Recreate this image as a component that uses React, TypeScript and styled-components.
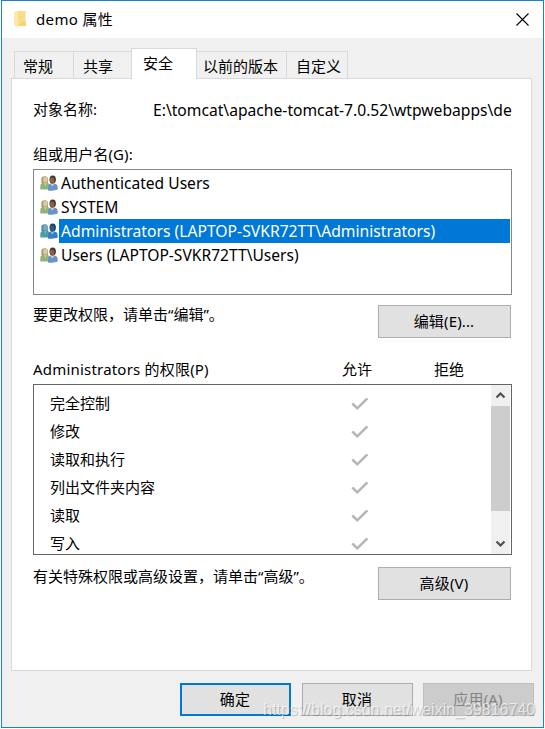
import React from "react";
import styled, { createGlobalStyle } from "styled-components";

const GlobalStyle = createGlobalStyle`
  * { box-sizing: border-box; }
  body {
    margin: 0;
    background: #fff;
    color: #000;
    font: 15px/20px "Noto Sans", "Noto Sans CJK SC", sans-serif;
    overflow: hidden;
  }
`;

const Window = styled.main`
  position: relative;
  display: flex;
  flex-direction: column;
  width: 543px;
  height: 728px;
  margin-left: 1px;
  border: 1px solid #1a80d4;
  background: #f0f0f0;
`;

const TitleBar = styled.header`
  display: flex;
  align-items: center;
  height: 37px;
  padding: 0 14px 1px 12px;
  background: #fff;
  svg { display: block; flex: none; }
`;

const Label = styled.span<{ $spacing?: number; $size?: number }>`
  display: block;
  margin: -1px 0 1px;
  white-space: pre;
  font-size: ${(p) => p.$size ?? 15}px;
  letter-spacing: ${(p) => p.$spacing ?? 0}px;
`;

const Title = styled(Label)`
  flex: 1;
  margin: -1px 0 0 8px;
`;

const TabStrip = styled.nav`
  display: flex;
  align-items: flex-end;
  height: 40px;
  margin: 0 12px;
`;

const Tab = styled.div<{ $width: number; $active?: boolean; $pad: number }>`
  width: ${(p) => p.$width}px;
  height: ${(p) => (p.$active ? 31 : 27)}px;
  margin-bottom: ${(p) => (p.$active ? -1 : 0)}px;
  padding: 4px 0 0 ${(p) => p.$pad}px;
  border: 1px solid #d9d9d9;
  border-bottom: 0;
  border-right-width: ${(p) => (p.$active ? 1 : 0)}px;
  background: ${(p) => (p.$active ? "#fff" : "#f0f0f0")};
  z-index: ${(p) => (p.$active ? 1 : 0)};
  &:last-child { border-right-width: 1px; }
  &:nth-child(4) { border-left: 0; }
`;

const Panel = styled.section`
  height: 593px;
  width: 521px;
  margin-left: 9px;
  padding: 21px 19px 0 21px;
  border: 1px solid #d9d9d9;
  background: #fff;
`;

const ObjectRow = styled.div`
  display: grid;
  grid-template-columns: 120px 1fr;
  height: 45px;
  span:last-child { margin: 0; overflow: hidden; }
`;

const UserList = styled.div`
  height: 126px;
  width: 479px;
  margin: 5px 0 10px;
  padding: 1px;
  border: 1px solid #828790;
`;

const UserRow = styled.div`
  display: flex;
  align-items: center;
  height: 24px;
  padding-left: 5px;
  svg { flex: none; margin-right: 1px; }
`;

const UserName = styled(Label)<{ $selected: boolean }>`
  flex: 1;
  height: 24px;
  margin: 0;
  padding-left: 2px;
  line-height: 24px;
  color: ${(p) => (p.$selected ? "#fff" : "#000")};
  background: ${(p) => (p.$selected ? "#0078d7" : "transparent")};
`;

const ActionRow = styled.div`
  display: flex;
  justify-content: space-between;
  width: 478px;
  height: 33px;
`;

const Button = styled.button<{ $width: number; $kind?: "default" | "disabled" }>`
  width: ${(p) => p.$width}px;
  height: 33px;
  padding: 0 1px 2px 0;
  display: flex;
  justify-content: center;
  align-items: center;
  font: inherit;
  letter-spacing: 0.15px;
  color: ${(p) => (p.$kind === "disabled" ? "#838383" : "#000")};
  background: ${(p) => (p.$kind === "disabled" ? "#ccc" : "#e1e1e1")};
  border: ${(p) =>
    p.$kind === "default" ? "2px solid #0078d7" : p.$kind === "disabled" ? "1px solid #bfbfbf" : "1px solid #adadad"};
`;

const PermissionHead = styled.div`
  display: grid;
  grid-template-columns: 309px 92px 1fr;
  margin: 21px 0 5px;
  height: 20px;
  span { margin: 0; }
`;

const PermissionBox = styled.div`
  display: flex;
  width: 479px;
  height: 171px;
  margin-bottom: 12px;
  padding-right: 1px;
  border: 1px solid #646464;
`;

const PermissionRows = styled.div`
  flex: 1;
  padding-top: 5px;
  overflow: hidden;
`;

const PermissionRow = styled.div`
  display: grid;
  grid-template-columns: 301px 1fr;
  align-items: center;
  height: 28px;
  padding-left: 16px;
  svg { display: block; }
`;

const ScrollBar = styled.div`
  display: flex;
  flex-direction: column;
  justify-content: space-between;
  width: 19px;
  background: #f0f0f0;
`;

const ScrollThumb = styled.div`
  height: 105px;
  margin-bottom: 22px;
  background: #cdcdcd;
`;

const ScrollArrow = styled.svg`
  display: block;
  width: 19px;
  height: 21px;
`;

const Footer = styled.footer`
  display: grid;
  grid-template-columns: 122px 121px 111px;
  justify-content: end;
  margin: 12px 9px 0 0;
`;

const Watermark = styled.div`
  position: absolute;
  left: 261px;
  top: 699px;
  white-space: nowrap;
  font: 16px/20px "Liberation Sans", Arial, sans-serif;
  color: rgba(255, 255, 255, 0.65);
  text-shadow: 1px 1px 1px rgba(0, 0, 0, 0.22);
`;

const FolderIcon = () => (
  <svg width="14" height="18" viewBox="0 0 14 18">
    <path d="M1 2h10v14H1z" fill="#f3cb62" />
    <path d="M3 1h8.5v15H3z" fill="#f8dc8a" />
    <path d="M9 11h3v5H5z" fill="#f6d374" />
    <path d="M0 1l4 2v15l-4-3z" fill="#ffe9a6" />
  </svg>
);

const CloseIcon = () => (
  <svg width="13" height="13" viewBox="0 0 13 13">
    <path d="M.5.5l12 12M12.5.5l-12 12" stroke="#000" strokeWidth="1.1" />
  </svg>
);

const UsersIcon = ({ selected }: { selected: boolean }) => {
  const c = selected
    ? { hair: "#4a8d9e", face: "#79aac0", green: "#4b9caa", dark: "#173f68", skin: "#29608b", blue: "#357fc3" }
    : { hair: "#a49b62", face: "#e1c4a2", green: "#8fb477", dark: "#3f3831", skin: "#8a6041", blue: "#6c93c5" };
  return (
    <svg width="18" height="16" viewBox="0 0 18 16">
      <path d="M1.4 8V3.2C2 .7 6.8.2 7.8 3.2V8z" fill={c.hair} />
      <ellipse cx="5.2" cy="4.7" rx="2.1" ry="2.9" fill={c.face} />
      <path d="M.3 14.5v-3.3C.3 8.8 2 8 3.6 7.6l1.8 1.2 1.8-1.2 2 1.4v5.5z" fill={c.green} />
      <path d="M4.2 8l1.2 3.2L6.7 8z" fill={c.face} />
      <ellipse cx="12.7" cy="4.6" rx="3.2" ry="4" fill={c.dark} />
      <ellipse cx="12.1" cy="5.7" rx="2.3" ry="3.1" fill={c.skin} />
      <path d="M8 15.4v-3.5c0-2 1.5-2.8 3-3.3l1.5 1.2 2-1.2c2.2.5 3.2 1.8 3.2 3.8v2.1c-2 1.1-6.5 1.5-9.7.9z" fill={c.blue} />
      <path d="M11 9l1 2.5L13.8 9z" fill={selected ? "#a2cbe9" : "#d7dfe8"} />
    </svg>
  );
};

const CheckIcon = () => (
  <svg width="18" height="14" viewBox="0 0 18 14">
    <path d="M1.3 6.5L6.3 11.3 16.4 1.3" fill="none" stroke="#b5b5b5" strokeWidth="2.5" />
  </svg>
);

const users = [
  { name: "Authenticated Users", size: 15.6 },
  { name: "SYSTEM", size: 15.6 },
  { name: "Administrators (LAPTOP-SVKR72TT\\Administrators)", size: 15.7, selected: true },
  { name: "Users (LAPTOP-SVKR72TT\\Users)", size: 15.6 },
];

const permissions = ["完全控制", "修改", "读取和执行", "列出文件夹内容", "读取", "写入"];

export default function App() {
  return (
    <>
      <GlobalStyle />
      <Window>
        <TitleBar>
          <FolderIcon />
          <Title $spacing={0.35}>demo 属性</Title>
          <CloseIcon />
        </TitleBar>
        <TabStrip>
          <Tab $width={59} $pad={8}>常规</Tab>
          <Tab $width={58} $pad={9}>共享</Tab>
          <Tab $width={66} $pad={11} $active>安全</Tab>
          <Tab $width={89} $pad={6}>以前的版本</Tab>
          <Tab $width={62} $pad={9}>自定义</Tab>
        </TabStrip>
        <Panel>
          <ObjectRow>
            <Label>对象名称:</Label>
            <Label $size={15.65}>E:\tomcat\apache-tomcat-7.0.52\wtpwebapps\demo</Label>
          </ObjectRow>
          <Label $spacing={0.1}>组或用户名(G):</Label>
          <UserList>
            {users.map((u) => (
              <UserRow key={u.name}>
                <UsersIcon selected={!!u.selected} />
                <UserName $selected={!!u.selected} $size={u.size}>{u.name}</UserName>
              </UserRow>
            ))}
          </UserList>
          <ActionRow>
            <Label>要更改权限，请单击“编辑”。</Label>
            <Button $width={133}>编辑(E)...</Button>
          </ActionRow>
          <PermissionHead>
            <Label $spacing={0.2}>Administrators 的权限(P)</Label>
            <Label>允许</Label>
            <Label>拒绝</Label>
          </PermissionHead>
          <PermissionBox>
            <PermissionRows>
              {permissions.map((name) => (
                <PermissionRow key={name}>
                  <Label>{name}</Label>
                  <CheckIcon />
                </PermissionRow>
              ))}
            </PermissionRows>
            <ScrollBar>
              <ScrollArrow viewBox="0 0 19 21">
                <path d="M5.5 12.5l4-4 4 4" fill="none" stroke="#505050" strokeWidth="2.2" />
              </ScrollArrow>
              <ScrollThumb />
              <ScrollArrow viewBox="0 0 19 21">
                <path d="M5.5 8.5l4 4 4-4" fill="none" stroke="#505050" strokeWidth="2.2" />
              </ScrollArrow>
            </ScrollBar>
          </PermissionBox>
          <ActionRow>
            <Label>有关特殊权限或高级设置，请单击“高级”。</Label>
            <Button $width={133}>高级(V)</Button>
          </ActionRow>
        </Panel>
        <Footer>
          <Button $width={111} $kind="default">确定</Button>
          <Button $width={111}>取消</Button>
          <Button $width={111} $kind="disabled">应用(A)</Button>
        </Footer>
        <Watermark>https://blog.csdn.net/weixin_39816740</Watermark>
      </Window>
    </>
  );
}
